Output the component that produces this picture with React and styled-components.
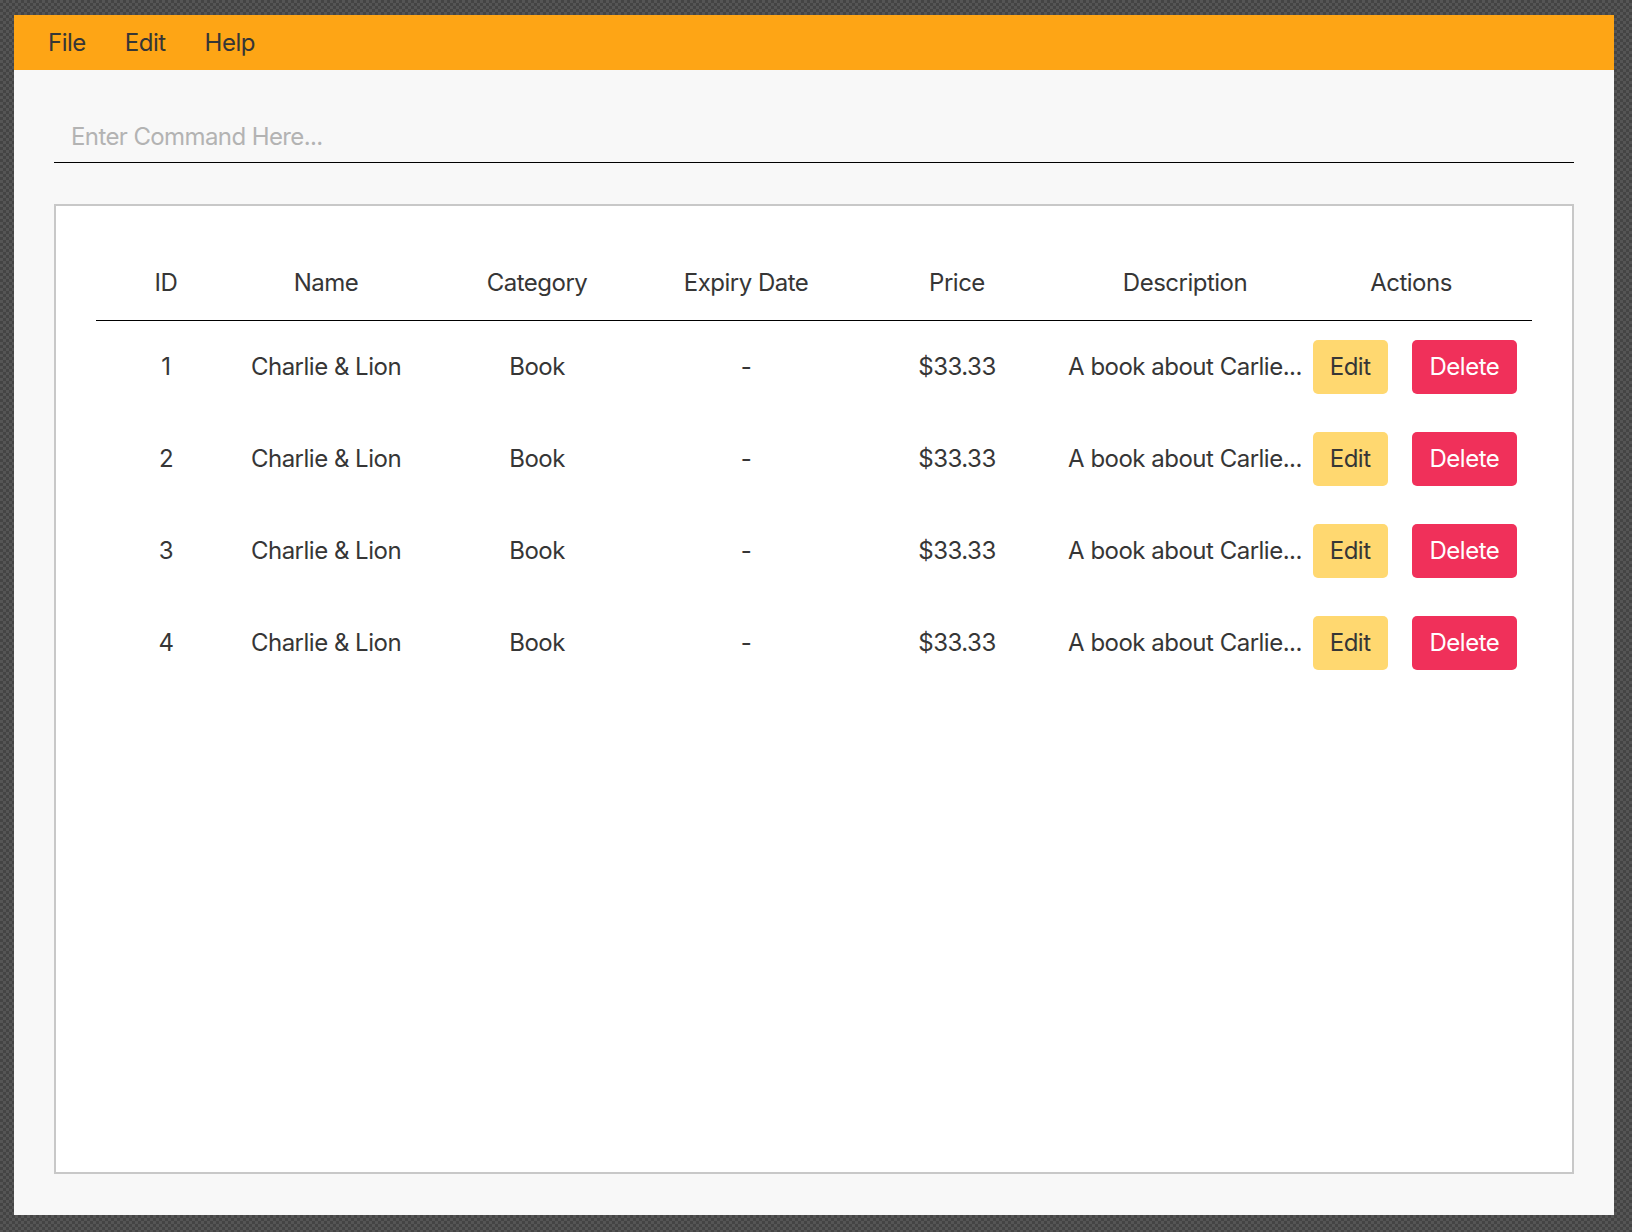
import React from "react";
import styled, { createGlobalStyle } from "styled-components";

const GlobalStyle = createGlobalStyle`
  html, body {
    margin: 0;
    padding: 0;
  }
  body {
    width: 1632px;
    height: 1232px;
    overflow: hidden;
    font-family: Inter, "Noto Sans", sans-serif;
    letter-spacing: -0.5px;
    background-color: #4b4b4b;
    background-image: repeating-conic-gradient(#444 0 25%, #555 0 50%);
    background-size: 6px 6px;
  }
`;

const columns = "140px 180px 242px 176px 246px 210px 242px";

const items = [1, 2, 3, 4].map((id) => ({
  id,
  name: "Charlie & Lion",
  category: "Book",
  expiry: "-",
  price: "$33.33",
  description: "A book about Carlie...",
}));

const App = () => {
  return (
    <>
      <GlobalStyle />
      <Screen>
        <Window>
          <MenuBar>
            <MenuItem>File</MenuItem>
            <MenuItem>Edit</MenuItem>
            <MenuItem>Help</MenuItem>
          </MenuBar>
          <Content>
            <CommandInput placeholder="Enter Command Here..." />
            <Card>
              <HeaderRow>
                <HeaderCell>ID</HeaderCell>
                <HeaderCell>Name</HeaderCell>
                <HeaderCell>Category</HeaderCell>
                <HeaderCell>Expiry Date</HeaderCell>
                <HeaderCell>Price</HeaderCell>
                <HeaderCell>Description</HeaderCell>
                <HeaderCell>Actions</HeaderCell>
              </HeaderRow>
              {items.map((item) => (
                <Row key={item.id}>
                  <Cell>{item.id}</Cell>
                  <Cell>{item.name}</Cell>
                  <Cell>{item.category}</Cell>
                  <Cell>{item.expiry}</Cell>
                  <Cell>{item.price}</Cell>
                  <Cell>{item.description}</Cell>
                  <ActionsCell>
                    <ActionButton $variant="edit">Edit</ActionButton>
                    <ActionButton $variant="delete">Delete</ActionButton>
                  </ActionsCell>
                </Row>
              ))}
            </Card>
          </Content>
        </Window>
      </Screen>
    </>
  );
};

export default App;

const Screen = styled.div`
  box-sizing: border-box;
  width: 1632px;
  height: 1232px;
  padding: 15px 18px 17px 14px;
`;

const Window = styled.div`
  width: 1600px;
  height: 1200px;
  background: #f8f8f8;
  display: flex;
  flex-direction: column;
`;

const MenuBar = styled.div`
  height: 55px;
  background: #fea515;
  display: flex;
  align-items: center;
  padding-left: 14px;
  box-sizing: border-box;
`;

const MenuItem = styled.div`
  font-size: 24px;
  color: #363636;
  padding: 0 19px 0 20px;
  cursor: default;
`;

const Content = styled.div`
  flex: 1;
  display: flex;
  flex-direction: column;
  padding: 40px 40px 41px 40px;
  min-height: 0;
`;

const CommandInput = styled.input`
  box-sizing: border-box;
  height: 53px;
  width: 100%;
  border: none;
  border-bottom: 1px solid #000;
  background: transparent;
  padding: 0 0 0 17px;
  font-family: Inter, "Noto Sans", sans-serif;
  font-size: 24px;
  letter-spacing: -0.6px;
  color: #363636;
  outline: none;
  &::placeholder {
    color: #b3b3b3;
  }
`;

const Card = styled.div`
  margin-top: 41px;
  flex: 1;
  background: #fff;
  border: 2px solid #c8c8c8;
  padding: 40px;
  box-sizing: border-box;
`;

const HeaderRow = styled.div`
  display: grid;
  grid-template-columns: ${columns};
  height: 74px;
  border-bottom: 1px solid #000;
  align-items: center;
`;

const HeaderCell = styled.div`
  text-align: center;
  font-size: 24px;
  color: #363636;
  white-space: nowrap;
  padding-bottom: 2px;
`;

const Row = styled.div`
  display: grid;
  grid-template-columns: ${columns};
  height: 92px;
  align-items: center;
`;

const Cell = styled.div`
  text-align: center;
  font-size: 24px;
  color: #363636;
  white-space: nowrap;
  display: flex;
  justify-content: center;
  padding-bottom: 2px;
`;

const ActionsCell = styled.div`
  display: flex;
  justify-content: center;
  align-items: center;
  gap: 24px;
  padding-left: 8px;
`;

const ActionButton = styled.button`
  height: 54px;
  padding: 0 ${(p) => (p.$variant === "delete" ? "18px" : "17px")} 2px;
  border: none;
  border-radius: 5px;
  font-family: Inter, "Noto Sans", sans-serif;
  font-size: 24px;
  letter-spacing: -0.5px;
  background: ${(p) => (p.$variant === "delete" ? "#f0305a" : "#ffd870")};
  color: ${(p) => (p.$variant === "delete" ? "#fff" : "#363636")};
  cursor: pointer;
`;
